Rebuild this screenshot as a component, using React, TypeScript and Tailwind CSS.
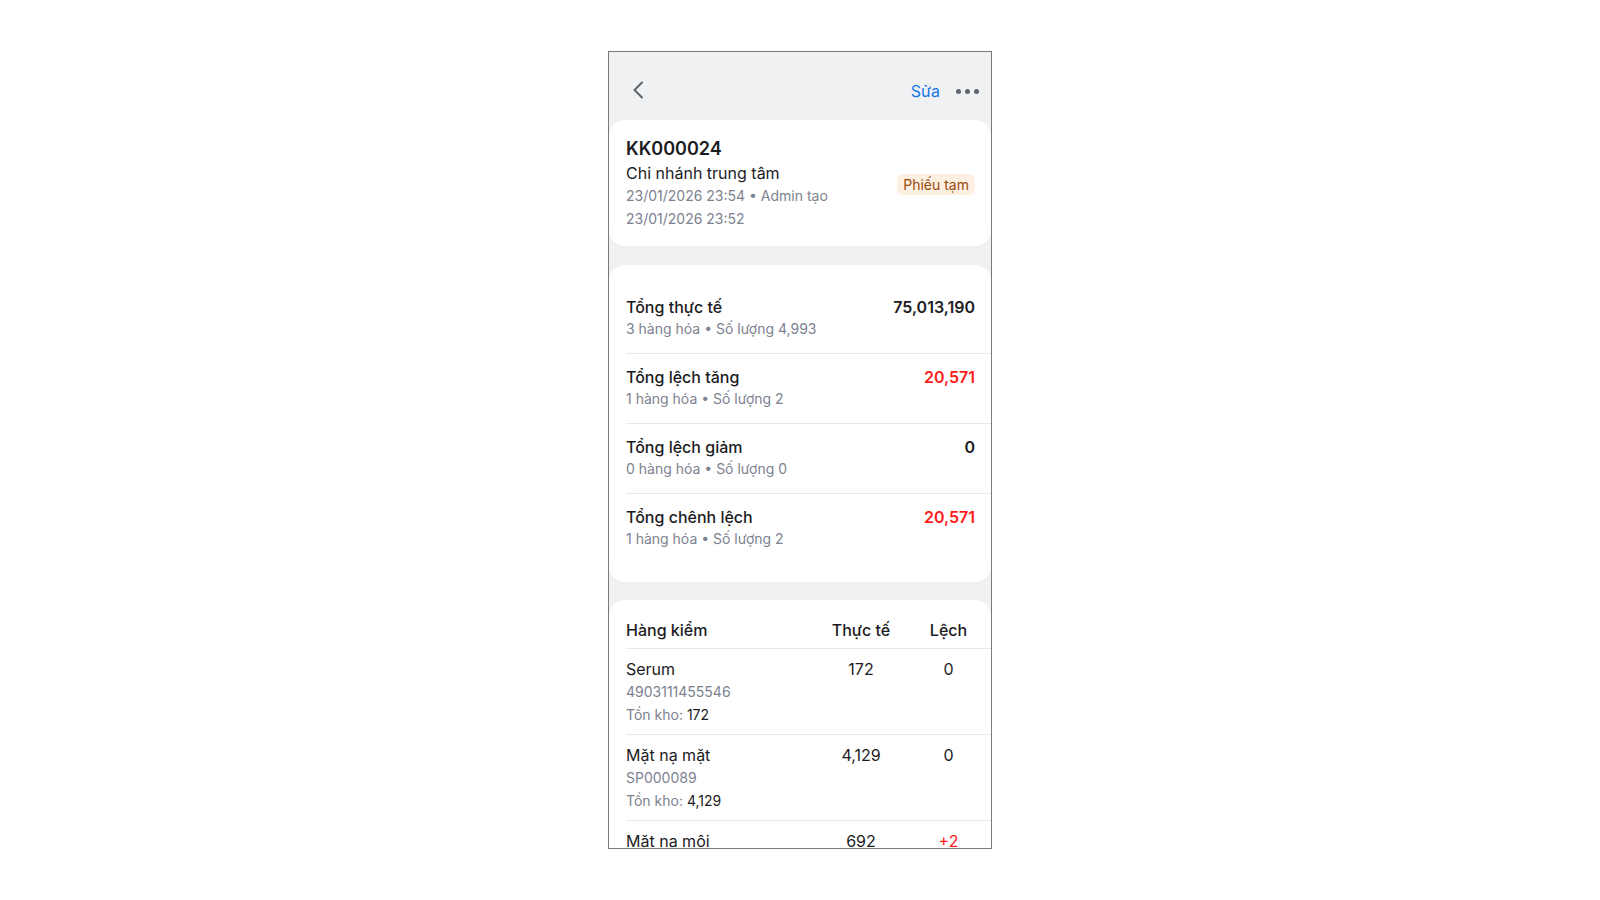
import React from "react";

const font = { fontFamily: "Inter, 'Noto Sans', sans-serif" };

function SummaryRow({
  title,
  sub,
  value,
  red,
  last,
}: {
  title: string;
  sub: string;
  value: string;
  red?: boolean;
  last?: boolean;
}) {
  return (
    <div className={"ml-[17px] " + (last ? "" : "border-b border-[#e8e9ec]")}>
      <div className="flex items-start justify-between pr-4 pt-[13px] pb-[14px]">
        <div>
          <div className="text-[16px] leading-[20px] font-medium text-[#1c1c1e]">{title}</div>
          <div className="mt-0.5 text-[14px] leading-[20px] text-[#7c8290]">{sub}</div>
        </div>
        <div
          className={
            "text-[16px] leading-[20px] font-semibold " +
            (red ? "text-[#ff1a1a]" : "text-[#1c1c1e]")
          }
        >
          {value}
        </div>
      </div>
    </div>
  );
}

function ItemRow({
  name,
  code,
  stock,
  actual,
  diff,
  red,
}: {
  name: string;
  code: string;
  stock: string;
  actual: string;
  diff: string;
  red?: boolean;
}) {
  return (
    <div className="ml-[17px] border-b border-[#e8e9ec] pr-4 pt-[9px] pb-[8px] flex items-start">
      <div className="flex-1 min-w-0">
        <div className="text-[16px] leading-[22px] text-[#1c1c1e]">{name}</div>
        <div className="mt-px text-[14px] leading-[22px] text-[#7c8290]">{code}</div>
        <div className="mt-px text-[14px] leading-[22px] text-[#7c8290]">
          Tồn kho: <span className="text-[#1c1c1e]">{stock}</span>
        </div>
      </div>
      <div className="w-[80px] text-center text-[16px] leading-[22px] text-[#1c1c1e]">{actual}</div>
      <div
        className={
          "ml-[21px] w-[53px] text-center text-[16px] leading-[22px] " +
          (red ? "text-[#ff1a1a]" : "text-[#1c1c1e]")
        }
      >
        {diff}
      </div>
    </div>
  );
}

export default function App() {
  return (
    <div className="w-full h-[900px] bg-white flex items-center justify-center" style={font}>
      <div className="w-[384px] h-[798px] border border-[#7a7a7a] bg-[#f0f1f3] overflow-hidden flex flex-col">
        {/* Header */}
        <div className="pt-4 pb-2 shrink-0">
          <div className="h-11 flex items-center justify-between pl-[22px] pr-[11px]">
            <svg width="14" height="20" viewBox="0 0 14 20" fill="none">
              <path d="M11 2.5 L3.5 10 L11 17.5" stroke="#5b6270" strokeWidth="2" strokeLinecap="round" strokeLinejoin="round" />
            </svg>
            <div className="flex items-center">
              <span className="text-[16px] leading-[20px] text-[#1677e8] mt-0.5">Sửa</span>
              <div className="ml-[15px] flex items-center gap-[4px] px-[1px] mt-0.5">
                <span className="block w-[5px] h-[5px] rounded-full bg-[#5e6470]" />
                <span className="block w-[5px] h-[5px] rounded-full bg-[#5e6470]" />
                <span className="block w-[5px] h-[5px] rounded-full bg-[#5e6470]" />
              </div>
            </div>
          </div>
        </div>

        {/* Card 1 */}
        <div className="bg-white rounded-[16px] pl-[17px] pr-4 pt-[17px] pb-4 flex items-center justify-between shrink-0">
          <div>
            <div className="text-[18px] leading-[24px] font-semibold text-[#1c1c1e]">KK000024</div>
            <div className="mt-px text-[16px] leading-[22px] text-[#1c1c1e]">Chi nhánh trung tâm</div>
            <div className="mt-px text-[14px] leading-[22px] text-[#7c8290]">23/01/2026 23:54 • Admin tạo</div>
            <div className="mt-px text-[14px] leading-[22px] text-[#7c8290]">23/01/2026 23:52</div>
          </div>
          <div className="mt-0.5 rounded-[6px] bg-[#fdf0e2] px-[6px] text-[14px] leading-[21px] text-[#9a4a0c]">
            Phiếu tạm
          </div>
        </div>

        {/* Card 2 */}
        <div className="mt-[19px] bg-white rounded-[16px] pt-[19px] pb-[19px] shrink-0">
          <SummaryRow title="Tổng thực tế" sub="3 hàng hóa • Số lượng 4,993" value="75,013,190" />
          <SummaryRow title="Tổng lệch tăng" sub="1 hàng hóa • Số lượng 2" value="20,571" red />
          <SummaryRow title="Tổng lệch giảm" sub="0 hàng hóa • Số lượng 0" value="0" />
          <SummaryRow title="Tổng chênh lệch" sub="1 hàng hóa • Số lượng 2" value="20,571" red last />
        </div>

        {/* Card 3 */}
        <div className="mt-[18px] bg-white rounded-t-[16px] shrink-0">
          <div className="ml-[17px] border-b border-[#e8e9ec] pr-4 pt-[18px] pb-[6px] flex items-center">
            <div className="flex-1 text-[16px] leading-[24px] font-medium text-[#1c1c1e]">Hàng kiểm</div>
            <div className="w-[80px] text-center text-[16px] leading-[24px] font-medium text-[#1c1c1e]">Thực tế</div>
            <div className="ml-[21px] w-[53px] text-center text-[16px] leading-[24px] font-medium text-[#1c1c1e]">Lệch</div>
          </div>
          <ItemRow name="Serum" code="4903111455546" stock="172" actual="172" diff="0" />
          <ItemRow name="Mặt nạ mặt" code="SP000089" stock="4,129" actual="4,129" diff="0" />
          <ItemRow name="Mặt nạ môi" code="SP000090" stock="690" actual="692" diff="+2" red />
        </div>
      </div>
    </div>
  );
}
